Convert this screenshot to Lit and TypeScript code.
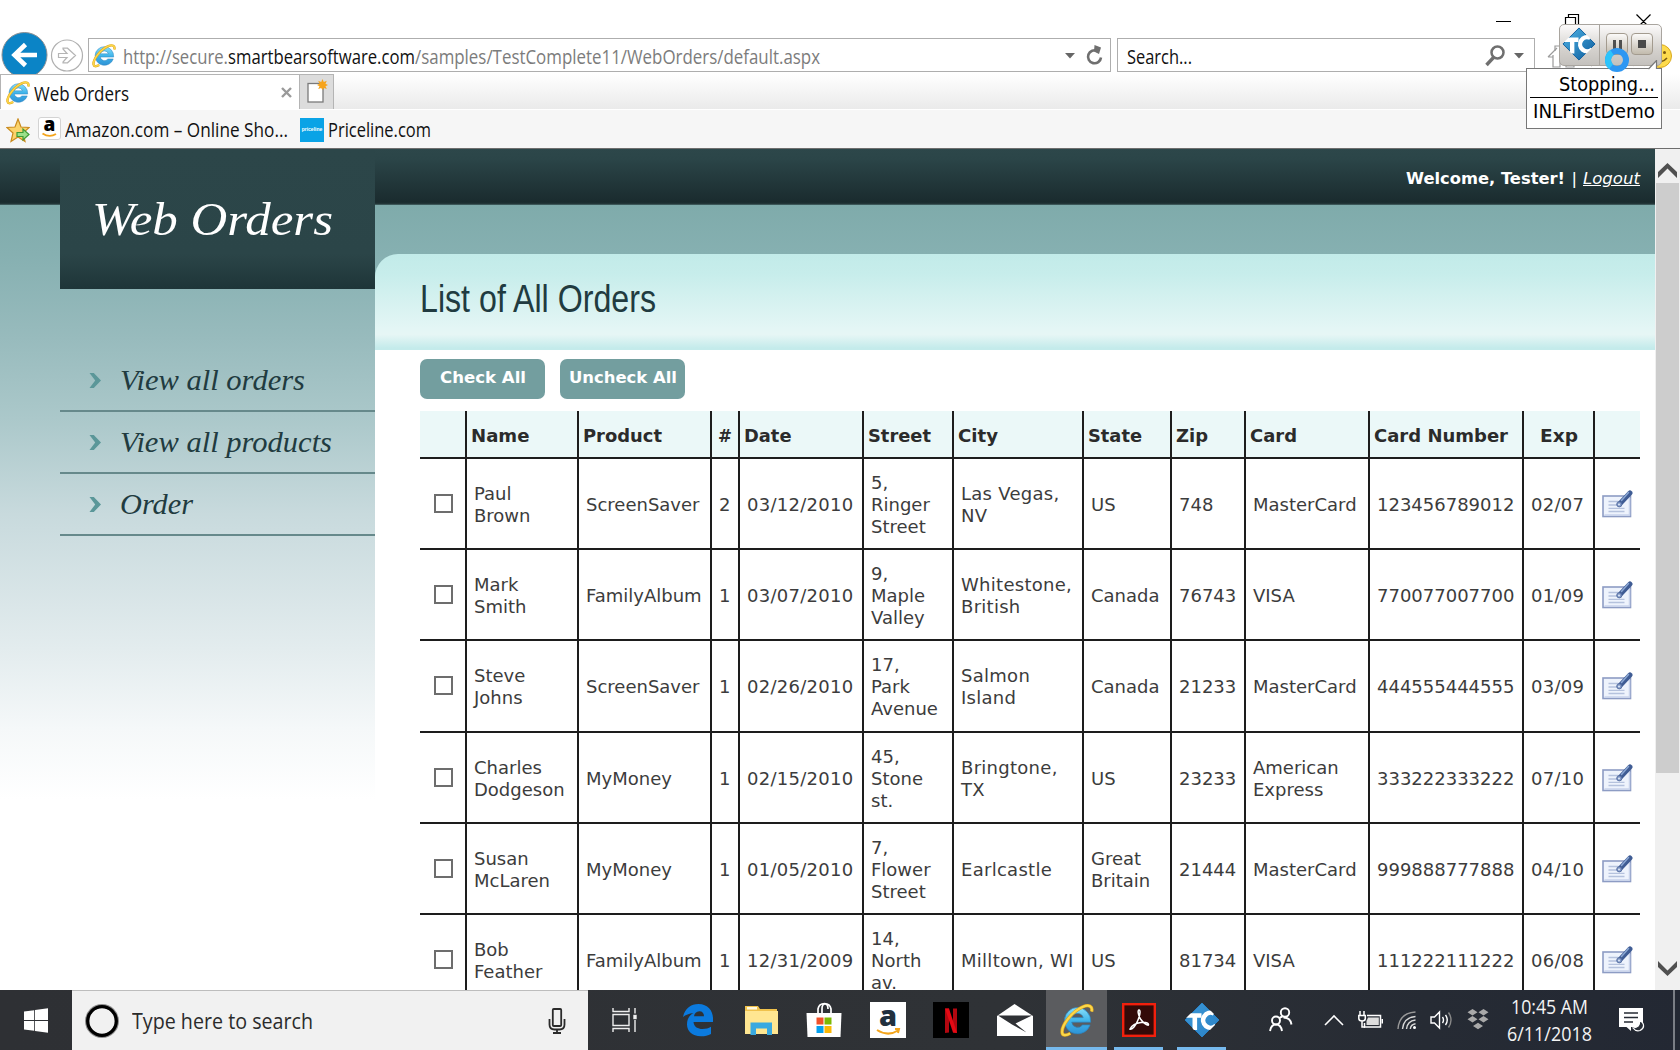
import { LitElement, html, css } from "lit";
import { customElement, property, state } from "lit/decorators.js";
import { styleMap } from "lit/directives/style-map.js";

/** One line of text, condensed or widened to occupy exactly `w` pixels. */
@customElement("fit-text")
class FitText extends LitElement {
  @property({ type: Number }) w = 0;
  @property({ type: Boolean }) underline = false;
  @state() private ratio = 1;
  static styles = css`
    :host { display: inline-block; white-space: nowrap; flex: none; }
    .box { display: block; }
    .run { display: inline-block; transform-origin: 0 50%; }
    .under { text-decoration: underline; }
  `;
  firstUpdated() {
    const run = this.renderRoot.querySelector(".run") as HTMLElement;
    if (run.offsetWidth) this.ratio = this.w / run.getBoundingClientRect().width;
  }
  render() {
    return html`<span class="box" style=${styleMap({ width: `${this.w}px` })}
      ><span class="run ${this.underline ? "under" : ""}" style=${styleMap({ transform: `scaleX(${this.ratio})` })}><slot></slot></span></span>`;
  }
}

const ieLogo = (cls: string, id: string) => html`
  <svg class=${cls} viewBox="0 0 34 34">
    <defs><linearGradient id=${id} x1="0" y1="0" x2="0" y2="1">
      <stop offset="0" stop-color="#8be0fb"/><stop offset=".5" stop-color="#3fb4ea"/><stop offset="1" stop-color="#2f93d6"/>
    </linearGradient></defs>
    <path d="M17.5 4.5a13.2 13.2 0 1 0 12.6 17.4h-7.6a6 6 0 0 1-10.8-2.7h19a13.6 13.6 0 0 0-13.2-14.7zM11.8 14.6a6 6 0 0 1 11.4 0z" fill=${`url(#${id})`} stroke="#2a83bd" stroke-width=".7"/>
    <path d="M31.6 8.5c1.4-5-2.6-7.5-8.6-4.7C12 8.5 1 22.5 2.2 30c.5 3 4.2 2.6 8 .4" fill="none" stroke="#e0a21a" stroke-width="3.4"/>
    <path d="M31.6 8.5c1.4-5-2.6-7.5-8.6-4.7C12 8.5 1 22.5 2.2 30c.5 3 4.2 2.6 8 .4" fill="none" stroke="#fbd84a" stroke-width="2.1"/>
  </svg>`;

const tcLogo = (cls: string, id: string, light: string, dark: string) => html`
  <svg class=${cls} viewBox="0 0 36 36">
    <defs>
      <linearGradient id=${id} x1="0" y1="0" x2="1" y2="1">
        <stop offset="0" stop-color=${light}/><stop offset="1" stop-color=${dark}/>
      </linearGradient>
      <clipPath id=${id + "c"}><path d="M18 0 36 18 18 36 0 18z"/></clipPath>
    </defs>
    <path d="M18 1 35 18 18 35 1 18z" fill=${`url(#${id})`} stroke=${dark} stroke-linejoin="round" stroke-width="1"/>
    <g clip-path=${`url(#${id}c)`} stroke="#fff" fill="none">
      <path d="M1 13.500H17.500M10.800 13.500V28" stroke-width="4.600"/>
      <path d="M30 11.500a7.500 7.500 0 1 0 2 12" stroke-width="4.600"/>
    </g>
  </svg>`;

interface Order {
  name: string; product: string; qty: string; date: string; street: string; city: string;
  state: string; zip: string; card: string; number: string; exp: string;
}
const o = (name: string, product: string, qty: string, date: string, street: string, city: string,
  st: string, zip: string, card: string, number: string, exp: string): Order =>
  ({ name, product, qty, date, street, city, state: st, zip, card, number, exp });

const ORDERS: Order[] = [
  o("Paul\nBrown", "ScreenSaver", "2", "03/12/2010", "5,\nRinger\nStreet", "Las Vegas,\nNV", "US", "748", "MasterCard", "123456789012", "02/07"),
  o("Mark\nSmith", "FamilyAlbum", "1", "03/07/2010", "9,\nMaple\nValley", "Whitestone,\nBritish", "Canada", "76743", "VISA", "770077007700", "01/09"),
  o("Steve\nJohns", "ScreenSaver", "1", "02/26/2010", "17,\nPark\nAvenue", "Salmon\nIsland", "Canada", "21233", "MasterCard", "444555444555", "03/09"),
  o("Charles\nDodgeson", "MyMoney", "1", "02/15/2010", "45,\nStone\nst.", "Bringtone,\nTX", "US", "23233", "American\nExpress", "333222333222", "07/10"),
  o("Susan\nMcLaren", "MyMoney", "1", "01/05/2010", "7,\nFlower\nStreet", "Earlcastle", "Great\nBritain", "21444", "MasterCard", "999888777888", "04/10"),
  o("Bob\nFeather", "FamilyAlbum", "1", "12/31/2009", "14,\nNorth\nav.", "Milltown, WI", "US", "81734", "VISA", "111222111222", "06/08"),
];
const HEADS: [string, number][] = [["Name", 58.5], ["Product", 79], ["#", 14], ["Date", 47.5], ["Street", 63], ["City", 40],
  ["State", 54], ["Zip", 32], ["Card", 47], ["Card Number", 134], ["Exp", 38]];

/** Orders grid with check boxes and edit buttons. */
@customElement("orders-table")
class OrdersTable extends LitElement {
  static styles = css`
    :host { display: block; width: 1220px; font: 18px/22px Verdana, "DejaVu Sans", sans-serif; color: #3c3c3c; }
    .row { display: grid; grid-template-columns: 45px 112px 133px 28px 124px 90px 130px 88px 74px 124px 154px 71px 47px;
      height: 91.2px; box-sizing: border-box; border-bottom: 2px solid #1d1d1d; }
    .head { height: 48px; background: #ebf8f8; font-weight: bold; color: #2b2b2b; }
    .c { display: flex; align-items: center; border-left: 2px solid #1d1d1d; padding: 3px 0 0 7px; white-space: pre; }
    .c:first-child { border-left: none; padding: 0 0 0 14px; }
    .head .c { padding: 3px 0 0 4px; }
    .head .num { padding-left: 6px; }
    .date, .city { letter-spacing: .28px; }
    .head .exp { padding-left: 16px; }
    .row .last { padding-top: 1px; }
    .ck { width: 15px; height: 15px; border: 2px solid #6d6d6d; background: #fff; }
    .edit { width: 31px; height: 28px; }
  `;
  private edit() {
    return html`<svg class="edit" viewBox="0 0 31 28">
      <rect x="1" y="6" width="27.5" height="20.5" fill="#eef3fc" stroke="#8d9cc4" stroke-width="1.6"/>
      <path d="M2.5 25h25V8" fill="none" stroke="#c9d4ec" stroke-width="1.5"/>
      <path d="M6.5 11.500h10M6.500 15h9M6.500 18.300h16M6.500 21.500h16" stroke="#b5c2dd" stroke-width="1.3"/>
      <path d="M18.500 13 28 3" stroke="#3f5c94" stroke-width="5" stroke-linecap="round"/>
      <path d="M19.5 10.5 26.500 2.500" stroke="#8ba7d3" stroke-width="1.5" stroke-linecap="round"/>
      <circle cx="17.3" cy="14.3" r="2.6" fill="#7f97c4" stroke="#4b659b" stroke-width=".8"/>
      <circle cx="17" cy="14.6" r="1" fill="#dfe8f6"/>
    </svg>`;
  }
  render() {
    const headCls = (h: string) => (h === "Exp" ? "c exp" : h === "#" ? "c num" : "c");
    return html`
      <div class="row head">
        <div class="c"></div>
        ${HEADS.map(([h, w]) => html`<div class=${headCls(h)}><fit-text .w=${w}>${h}</fit-text></div>`)}
        <div class="c"></div>
      </div>
      ${ORDERS.map(r => html`<div class="row">
        <div class="c"><span class="ck"></span></div>
        <div class="c">${r.name}</div><div class="c">${r.product}</div><div class="c">${r.qty}</div>
        <div class="c date">${r.date}</div><div class="c">${r.street}</div><div class="c city">${r.city}</div>
        <div class="c">${r.state}</div><div class="c">${r.zip}</div><div class="c">${r.card}</div>
        <div class="c">${r.number}</div><div class="c date">${r.exp}</div><div class="c last">${this.edit()}</div>
      </div>`)}`;
  }
}

/** Browser window frame: address bar, tabs, favourites. */
@customElement("browser-chrome")
class BrowserChrome extends LitElement {
  static styles = css`
    :host { display: flex; flex-direction: column; height: 149px; box-sizing: border-box; background: #fff; border-bottom: 1px solid #6e6e6e;
      font: 20px/26px "Segoe UI", "Open Sans", sans-serif; color: #111; }
    .caption { height: 38px; display: flex; justify-content: flex-end; padding-right: 28px; box-sizing: border-box; }
    .win { width: 160px; height: 26px; margin-top: 8px; }
    .bar { height: 36px; display: flex; align-items: flex-start; }
    .nav { width: 88px; height: 43px; margin-top: -7px; flex: none; }
    .field { height: 34px; box-sizing: border-box; border: 1px solid #aeaeae; display: flex; align-items: center; background: #fff; }
    .addr { width: 1023px; padding: 2px 5px 0 3px; }
    .search { width: 418px; margin-left: 6px; padding: 2px 10px 0 9px; }
    .field fit-text { margin-top: 1px; }
    .ie { width: 24px; height: 25px; flex: none; }
    .addr .ie { margin-right: 7px; margin-top: -2px; }
    .dim { color: #7c7c7c; }
    .grow { flex: 1; }
    .tools { width: 145px; height: 34px; flex: none; }
    .drop { width: 10px; height: 6px; margin-right: 10px; }
    .reload { width: 20px; height: 22px; margin-top: -3px; }
    .glass { width: 22px; height: 24px; margin-right: 8px; margin-top: -1px; }
    .drop2 { width: 10px; height: 6px; }
    .tabs { height: 35px; display: flex; background: linear-gradient(#fff, #eaeaea); }
    .tab { width: 300px; box-sizing: border-box; border: 1px solid #b4b4b4; border-bottom: none; background: #fff; display: flex; align-items: center; padding: 0 7px 0 5px; }
    .tab .ie { margin-right: 4px; }
    .tab fit-text { margin-top: 3px; }
    .x { width: 11px; height: 11px; }
    .new { width: 34px; box-sizing: border-box; border: 1px solid #b4b4b4; border-left: none; border-bottom: none; background: #dcdcdc; display: flex; justify-content: center; align-items: center; }
    .page { width: 22px; height: 24px; margin-top: -2px; }
    .favs { height: 39px; box-sizing: border-box; border-top: 1px solid #fff; background: #f6f6f6; display: flex; align-items: center; padding-left: 6px; }
    .favs fit-text { margin-top: 2px; }
    .star { width: 24px; height: 25px; margin-right: 8px; margin-top: 2px; }
    .amz { width: 23px; height: 24px; margin-right: 4px; margin-top: -1px; }
    .price { width: 24px; height: 24px; margin: 2px 4px 0 12px; background: #0aa3e6; color: #fff; display: flex; align-items: center; justify-content: center; font: bold 5px/6px "Liberation Sans", sans-serif; }
    .price span { margin-top: -2px; }
  `;
  render() {
    return html`
      <div class="caption"><svg class="win" viewBox="0 0 160 26" fill="none" stroke="#000" stroke-width="1.2">
        <path d="M4 13.500h15M73.500 9.500h10v10h-10zM76.500 9V6.500h10v10H84M144.500 6.500l14 14M158.500 6.500l-14 14"/></svg></div>
      <div class="bar">
        <svg class="nav" viewBox="0 0 88 43">
          <circle cx="24.500" cy="24" r="22.500" fill="#0b84c6" stroke="#8a8f93" stroke-width="1"/>
          <path d="M14 24h23M25.500 13.500 14.500 24l11 10.500" fill="none" stroke="#fff" stroke-width="4.600"/>
          <circle cx="67" cy="24.500" r="15.500" fill="#fff" stroke="#b0b0b0" stroke-width="1.200"/>
          <path d="M58.500 22.500h8.500l-4-4.500v-.8h4.500l8 7.300-8 7.300h-4.500v-.8l4-4.500h-8.500z" fill="#fff" stroke="#b5b5b5" stroke-width="1.200"/>
        </svg>
        <div class="field addr">
          ${ieLogo("ie", "ie1")}
          <fit-text .w=${105} class="dim">http://secure.</fit-text><fit-text .w=${187}>smartbearsoftware.com</fit-text><fit-text .w=${405} class="dim">/samples/TestComplete11/WebOrders/default.aspx</fit-text>
          <span class="grow"></span>
          <svg class="drop" viewBox="0 0 10 6"><path d="M0 0h10L5 5.500z" fill="#666"/></svg>
          <svg class="reload" viewBox="0 0 20 22"><path d="M12.500 7A6.500 6.500 0 1 0 16 13.500" fill="none" stroke="#6f6f6f" stroke-width="2.600"/><path d="M9.500 1 16 3.500 14 10 9 7.500z" fill="#6f6f6f"/></svg>
        </div>
        <div class="field search">
          <fit-text .w=${65}>Search...</fit-text><span class="grow"></span>
          <svg class="glass" viewBox="0 0 22 24"><circle cx="13.500" cy="8.500" r="6" fill="none" stroke="#6f6f6f" stroke-width="2.500"/><path d="M9.500 13.500 2.500 21" stroke="#6f6f6f" stroke-width="3.400"/></svg>
          <svg class="drop2" viewBox="0 0 10 6"><path d="M0 0h10L5 5.500z" fill="#666"/></svg>
        </div>
        <svg class="tools" viewBox="0 0 145 34">
          <path d="M13 19l9-9M18 17v12h7v-9h6v9h8v-12M13 19h5" fill="none" stroke="#9a9a9a" stroke-width="1.200"/>
          <path d="M20 13V8h4" fill="none" stroke="#9a9a9a" stroke-width="1.200"/>
          <path d="M56 28l8-6 8 6M98 28l6-8 6 8" fill="none" stroke="#9a9a9a" stroke-width="1.200"/>
          <circle cx="125" cy="18" r="11.500" fill="#fddb4d" stroke="#d9a91f"/>
          <circle cx="129.500" cy="14.500" r="1.500" fill="#7a5a10"/><path d="M119 21q7 6 13-1" fill="none" stroke="#7a5a10" stroke-width="1.500"/>
        </svg>
      </div>
      <div class="tabs">
        <div class="tab">${ieLogo("ie", "ie2")}<fit-text .w=${95}>Web Orders</fit-text><span class="grow"></span>
          <svg class="x" viewBox="0 0 11 11"><path d="M1 1l9 9M10 1l-9 9" stroke="#9a9a9a" stroke-width="2.400"/></svg></div>
        <div class="new"><svg class="page" viewBox="0 0 22 24"><rect x="2" y="4.500" width="15" height="18.500" fill="#fff" stroke="#7a7a7a" stroke-width="1.300"/>
          <path d="M16.500 0l1.300 3 3-1.300-1.300 3L22 6l-2.500 1.300 1.300 2.800-3-1L16.500 11l-1.300-1.900-3 1 1.300-2.800L11 6l2.500-1.300-1.300-3 3 1.300z" fill="#f6a41c"/></svg></div>
      </div>
      <div class="favs">
        <svg class="star" viewBox="0 0 24 25"><path d="M12 1l3 8 8.200.5-6.200 5.500 2 8.500-7-4.500-7 4.500 2-8.500L.8 9.500 9 9z" fill="#fbd36b" stroke="#c98a1d" stroke-width="1.200"/>
          <path d="M11 14.500h6v-3.500l6 5.500-6 5.500v-3.500h-6z" fill="#9be08a" stroke="#3f9a36" stroke-width="1.200"/></svg>
        <svg class="amz" viewBox="0 0 23 24"><rect x=".5" y=".5" width="22" height="22" rx="2.500" fill="#fff" stroke="#d3d3d3"/>
          <text x="11.500" y="14" text-anchor="middle" font-family="Open Sans, sans-serif" font-weight="800" font-size="19">a</text>
          <path d="M4.500 16.500q7 4.500 13.500.5" fill="none" stroke="#f4a51c" stroke-width="1.900"/></svg>
        <fit-text .w=${223}>Amazon.com – Online Sho...</fit-text>
        <span class="price"><span>priceline</span></span>
        <fit-text .w=${103}>Priceline.com</fit-text>
      </div>`;
  }
}

/** Windows task bar. */
@customElement("task-bar")
class TaskBar extends LitElement {
  static styles = css`
    :host { display: flex; height: 60px; background: linear-gradient(90deg, #2e3034 0, #2f3236 60%, #262b34 85%, #232833); font: 20px/27px "Segoe UI", "Open Sans", sans-serif; color: #f4f4f4; }
    .start { width: 72px; flex: none; display: flex; align-items: center; padding-left: 24px; box-sizing: border-box; }
    .flag { width: 24px; height: 25px; }
    .find { width: 516px; flex: none; box-sizing: border-box; border-top: 1px solid #bdbdbd; background: #f1f1f1; color: #2b2b2b; display: flex; align-items: center; padding: 0 22px 0 13px; }
    .ring { width: 34px; height: 38px; margin-right: 13px; }
    .hint { font-size: 21px; margin-top: 2px; }
    .grow { flex: 1; }
    .mic { width: 18px; height: 26px; }
    .apps { display: grid; grid-template-columns: 78px 63px 63px 64px 63px 64px 63px 61px 63px 63px; width: 645px; flex: none; }
    .app { display: flex; align-items: center; justify-content: center; box-sizing: border-box; border-bottom: 3px solid transparent; padding-top: 3px; }
    .app:first-child { padding-right: 5px; }
    .app svg { width: 36px; height: 36px; flex: none; }
    .app .small { width: 25px; height: 26px; }
    .app .mid { width: 34px; height: 34px; }
    .on { border-bottom-color: #76b9ed; }
    .cur { background: #5b5c5f; }
    .run { margin: 0 7px; }
    .side { flex: 1; display: flex; align-items: center; padding-left: 36px; }
    .side svg { flex: none; margin-top: -1px; }
    .p { width: 24px; height: 25px; margin-right: 31px; }
    .up { width: 20px; height: 12px; margin-right: 14px; }
    .bat { width: 25px; height: 20px; margin-right: 14px; }
    .wifi { width: 20px; height: 20px; margin-right: 13px; }
    .snd { width: 24px; height: 20px; margin-right: 12px; }
    .dbx { width: 24px; height: 21px; margin-right: 17px; }
    .clock { width: 84px; display: flex; flex-direction: column; align-items: center; }
    .note { width: 26px; height: 26px; margin-left: 28px; }
    .edge { width: 2px; align-self: stretch; background: #7a7e85; margin-left: 28px; }
  `;
  render() {
    return html`
      <div class="start"><svg class="flag" viewBox="0 0 24 25" fill="#fff"><path d="M0 3.600 10.200 2.200V12H0zM11 2.100 24 .2V12H11zM0 13h10.200v9.800L0 21.400zM11 13h13v11.800L11 22.900z"/></svg></div>
      <div class="find">
        <svg class="ring" viewBox="0 0 34 38"><circle cx="17" cy="19" r="15" fill="none" stroke="#8d8d8d" stroke-width="4"/><circle cx="17" cy="19" r="14.300" fill="none" stroke="#000" stroke-width="3.300"/></svg>
        <fit-text class="hint" .w=${181}>Type here to search</fit-text><span class="grow"></span>
        <svg class="mic" viewBox="0 0 18 26" fill="none" stroke="#2b2b2b" stroke-width="1.800"><rect x="4.800" y="1" width="8.400" height="17" rx="1"/><path d="M1.500 11v5.500q0 5 5 5h5q5 0 5-5V11M9 21.500v3.500M5 25h8"/></svg>
      </div>
      <div class="apps">
        <div class="app"><svg class="small" viewBox="0 0 25 26" fill="none" stroke="#eee" stroke-width="1.400"><path d="M1 1v3.500h16V1M1 25v-3.500h16V25M1 7.500h16v11H1zM23 1v5.500M23 13v12"/><rect x="22" y="8.500" width="2" height="3" fill="#fff"/></svg></div>
        <div class="app"><svg viewBox="0 0 36 36"><path d="M3 15C5 6 11 2 18.500 2 28 2 33 9 33 16.500V20H13.500c.5 5 4.500 7 9 7 3.500 0 6-.8 8.500-2.200V32c-3 1.600-6 2.300-10 2.300-9 0-14-5.300-14-12C7 17.500 9 13.500 13.500 11 9 11.500 5.500 13 3 15zm11-.8h10c0-3-1.500-5-4.700-5-3 0-4.800 2.200-5.300 5z" fill="#0b7ade"/></svg></div>
        <div class="app"><svg viewBox="0 0 36 36"><path d="M2 4h13l2 3h17v23H2z" fill="#f0c24c"/><path d="M2 9h33v23H2z" fill="#ffe691"/><rect x="4" y="5" width="10" height="2.500" fill="#fff8dc"/><path d="M7.500 33V20.500h21.500V33h-5v-6.500H13V33z" fill="#39a9e0"/></svg></div>
        <div class="app"><svg viewBox="0 0 36 36"><path d="M12 12V7q1-5.500 6.500-5.500T25 7v5M16 12V7q0-5 3-5t3 5" fill="none" stroke="#fff" stroke-width="1.700"/><path d="M.5 11h35L34.500 35H1.500z" fill="#fff"/><path d="M10.500 15.500h7v7h-7z" fill="#f0512a"/><path d="M18.500 15.500h7v7h-7z" fill="#7db904"/><path d="M10.500 24h7v7h-7z" fill="#05a0ee"/><path d="M18.500 24h7v7h-7z" fill="#fbb706"/></svg></div>
        <div class="app"><svg viewBox="0 0 36 36"><rect width="36" height="36" fill="#fff"/><text x="18" y="24" text-anchor="middle" font-family="Open Sans, sans-serif" font-weight="800" font-size="29" fill="#22303e">a</text><path d="M7 28q11 7 21 .5M25 27h4l-1 4" fill="none" stroke="#f4a51c" stroke-width="2"/></svg></div>
        <div class="app"><svg viewBox="0 0 36 36"><rect width="36" height="36" fill="#000"/><path d="M12 6.500h4v24l-4 .5zM20 6.500h4V31l-4-.5z" fill="#b20710"/><path d="M12 6.500h4L24 31l-4-.5z" fill="#e50914"/></svg></div>
        <div class="app"><svg viewBox="0 0 36 36"><path d="M0 14 17.500 2 36 14v20H0z" fill="#fff"/><path d="M1 13.500h34L18.500 21.500l11 9-14.500-8z" fill="#2f3135"/></svg></div>
        <div class="app cur on">${ieLogo("mid", "ie3")}</div>
        <div class="app on run"><svg class="mid" viewBox="0 0 34 34"><rect x="1.200" y="1.200" width="31.600" height="31.600" fill="#330a08" stroke="#f1200d" stroke-width="2.400"/><path d="M8 26c2-4 7-6 11-6.500 3-.3 7 0 7.500 2 0 2-5-1-8-5.500C16 12 15.500 7 17 7s1.500 4-1 10c-2 5-5.500 10-8 9z" fill="none" stroke="#fff" stroke-width="1.500"/></svg></div>
        <div class="app on run">${tcLogo("big", "tc1", "#3b97d6", "#2a82c6")}</div>
      </div>
      <div class="side">
        <svg class="p" viewBox="0 0 24 25" fill="none" stroke="#fff" stroke-width="1.900"><circle cx="16" cy="5.500" r="4.200"/><path d="M14.500 10.500q7 0 8 7M10.500 11q1-1 3-1.200"/><circle cx="7" cy="13.500" r="4"/><path d="M1 24q1-6.500 6-6.500T13 24"/></svg>
        <svg class="up" viewBox="0 0 20 12"><path d="M1 11 10 2l9 9" fill="none" stroke="#fff" stroke-width="1.600"/></svg>
        <svg class="bat" viewBox="0 0 25 20"><path d="M9 5.500h13.500v11.500H6.500v-4" fill="none" stroke="#fff" stroke-width="1.500"/><path d="M10 7.500h10.800v7.500H8.500v-4z" fill="#ddd"/><path d="M23.500 9h1.500v4.500h-1.500z" fill="#fff"/><path d="M2 1v4M6 1v4M.8 5.500h6.500v3q0 2.500-3.200 2.500T.8 8.500zM4 11v6h3" fill="none" stroke="#fff" stroke-width="1.500"/></svg>
        <svg class="wifi" viewBox="0 0 20 20" fill="none" stroke="#d8d8d8" stroke-width="1.400"><path d="M1 19Q2 3 18.500 2" stroke="#999"/><path d="M5.500 19q1-11.500 13-12.500M9.500 19q.8-8 9-9M13.300 19q.5-4.500 5.200-5.200"/><circle cx="17.500" cy="17.500" r="1.500" fill="#fff" stroke="none"/></svg>
        <svg class="snd" viewBox="0 0 24 20" fill="none" stroke="#fff" stroke-width="1.400"><path d="M1 7h3.500l5-5v16l-5-5H1z"/><path d="M12.500 7q2 3 0 6M15.500 5q3.500 5 0 10"/><path d="M18.500 2.500q5 7.500 0 15" stroke="#888"/></svg>
        <svg class="dbx" viewBox="0 0 24 21" fill="#a9a9a9"><path d="M6.500 0l5 3.300-5 3.300-5-3.300zM17.500 0l5 3.300-5 3.300-5-3.300zM6.500 7l5 3.300-5 3.300-5-3.300zM17.500 7l5 3.300-5 3.300-5-3.300zM12 13.800l5 3.200-5 3.300L7 17z"/></svg>
        <div class="clock"><fit-text .w=${77}>10:45 AM</fit-text><fit-text .w=${85}>6/11/2018</fit-text></div>
        <svg class="note" viewBox="0 0 26 26"><path d="M0 1h24v19H12v4l-4.500-4H0z" fill="#fff"/><path d="M5 6h14M5 10.500h14M5 15h9" stroke="#262b34" stroke-width="1.500"/><path d="M20.500 13.500q1 7-6.500 7.500 3 4 7 2.500 5-2.500 3-7-1-2-3.500-3z" fill="#2a2f38" stroke="#fff" stroke-width="1.200"/></svg>
        <span class="edge"></span>
      </div>`;
  }
}

@customElement("app-root")
class AppRoot extends LitElement {
  static styles = css`
    :host { display: flex; flex-direction: column; position: relative; width: 1680px; height: 1050px; overflow: hidden; background: #fff; font-family: Verdana, "DejaVu Sans", sans-serif; }
    .view { height: 841px; display: flex; overflow: hidden; flex: none; }
    .site { width: 1655px; height: 841px; overflow: hidden; display: flex; align-items: flex-start;
      background: linear-gradient(#2d474a, #2b4548 18%, #1a2b2e 95%, #24383a 98%, #4f7071) 0 0 / 100% 56px no-repeat,
        linear-gradient(#7fabab 56px, #86b0b1 105px, #98bbbd 190px, #abc8ca 270px, #c8dadd 365px, #e3ecee 500px, #f5f8f9 580px, #fff 650px) 0 0 / 100% 100% no-repeat; }
    .left { width: 315px; margin-left: 60px; flex: none; }
    .brand { height: 140px; background: linear-gradient(#2c4649, #2b4548 75%, #1e3538); display: flex; align-items: center; padding-left: 32px; box-sizing: border-box;
      font: italic 47px/56px Georgia, "Liberation Serif", serif; color: #fff; }
    .menu { padding-top: 61px; font: italic 29px/36px Georgia, "Liberation Serif", serif; color: #213b40; }
    .item { height: 62px; box-sizing: border-box; border-bottom: 2px solid #66898b; display: flex; align-items: center; padding-left: 29px; }
    .chev { width: 12px; height: 15px; margin-right: 19px; }
    .item fit-text { margin-top: -1px; }
    .main { width: 1280px; flex: none; display: flex; flex-direction: column; }
    .user { height: 105px; flex: none; box-sizing: border-box; display: flex; justify-content: flex-end; gap: 6px; padding: 19px 15px 0 0; color: #fff; font-size: 16.5px; line-height: 22px; }
    .user .b { font-weight: bold; }
    .user .out { font-style: italic; }
    .band { height: 96px; flex: none; box-sizing: border-box; border-radius: 23px 0 0 0; padding: 0 0 7px 45px; display: flex; align-items: center;
      background: linear-gradient(#c2ebe9, #c7edeb 20%, #e4f6f5 78%, #e6f6f5 84%, #c4ebeb 98%); font: 38px/44px Arial, "Liberation Sans", sans-serif; color: #213b40; }
    .body { background: #fff; padding: 9px 0 0 45px; }
    .btns { display: flex; gap: 15px; margin-bottom: 12px; }
    .btn { width: 125px; height: 40px; border-radius: 7px; background: #739e9f; color: #fff; font-weight: bold; font-size: 16.5px; line-height: 22px; display: flex; align-items: center; justify-content: center; padding-bottom: 2px; box-sizing: border-box; }
    .scroll { width: 25px; background: #f0f0f0; display: flex; flex-direction: column; align-items: center; padding: 13px 0 13px; box-sizing: border-box; }
    .arr { width: 21px; height: 17px; flex: none; }
    .thumb { width: 23px; height: 590px; background: #cdcdcd; margin-top: 4px; }
    .rest { flex: 1; }
    .agent { position: absolute; left: 1559px; top: 24px; width: 103px; height: 42px; box-sizing: border-box; border: 1.5px solid #a9a59f; border-radius: 5px; background: linear-gradient(#fbfafa, #d5d2ce 60%, #c4c1bd); display: flex; align-items: center; }
    .agent .tc { width: 34px; height: 34px; margin-left: 2px; margin-top: -2px; flex: none; }
    .sep { width: 1px; align-self: stretch; background: #a9a59f; margin: 0 6px 0 3px; }
    .key { width: 22px; height: 22px; box-sizing: border-box; border: 1.5px solid #a39b8f; border-radius: 4px; background: linear-gradient(#fbfaf9, #d8d3cb 60%, #c2bbad); display: flex; align-items: center; justify-content: center; gap: 3px; margin: 0 3px 2px 0; flex: none; }
    .pz { width: 3px; height: 9px; background: #4f4f4f; }
    .st { width: 8px; height: 8px; background: #4a4a4a; }
    .tip { position: absolute; left: 1526px; top: 68px; width: 136px; height: 61px; box-sizing: border-box; border: 1.5px solid #777; background: #fff; font: 20px/25px Tahoma, "DejaVu Sans Condensed", "DejaVu Sans", sans-serif; color: #000; padding: 3px 3px 0; display: flex; flex-direction: column; align-items: flex-end; }
    .tip fit-text { margin-right: 3px; }
    .tip .line { width: 128px; height: 1px; background: #000; margin-bottom: 1px; }
    .notch { position: absolute; left: 1648px; top: 60px; width: 10px; height: 10px; }
    .busy { position: absolute; left: 1603px; top: 46px; width: 28px; height: 28px; }
  `;
  private item(t: string, w: number) {
    return html`<div class="item"><svg class="chev" viewBox="0 0 12 15"><path d="M.5 0h4.300L12 7.500 4.800 15H.5l5.700-7.500z" fill="#5b9799"/></svg><fit-text .w=${w}>${t}</fit-text></div>`;
  }
  render() {
    return html`
      <browser-chrome></browser-chrome>
      <div class="view">
        <div class="site">
          <div class="left">
            <div class="brand"><fit-text .w=${241}>Web Orders</fit-text></div>
            <div class="menu">${this.item("View all orders", 185)}${this.item("View all products", 212)}${this.item("Order", 73)}</div>
          </div>
          <div class="main">
            <div class="user"><fit-text class="b" .w=${159}>Welcome, Tester!</fit-text><span>|</span><fit-text class="out" underline .w=${57}>Logout</fit-text></div>
            <div class="band"><fit-text .w=${236}>List of All Orders</fit-text></div>
            <div class="body">
              <div class="btns"><div class="btn"><fit-text .w=${86}>Check All</fit-text></div><div class="btn"><fit-text .w=${108}>Uncheck All</fit-text></div></div>
              <orders-table></orders-table>
            </div>
          </div>
        </div>
        <div class="scroll">
          <svg class="arr" viewBox="0 0 21 17"><path d="M1 16V10L10.500 1 20 10v6l-9.500-9.500z" fill="#505050"/></svg>
          <div class="thumb"></div><div class="rest"></div>
          <svg class="arr" viewBox="0 0 21 17"><path d="M1 1v6l9.500 9L20 7V1l-9.500 9.500z" fill="#505050"/></svg>
        </div>
      </div>
      <task-bar></task-bar>
      <div class="agent">${tcLogo("tc", "tc2", "#4fb4e6", "#0d5c9c")}<span class="sep"></span>
        <span class="key"><span class="pz"></span><span class="pz"></span></span><span class="key"><span class="st"></span></span></div>
      <div class="tip"><fit-text .w=${96}>Stopping...</fit-text><span class="line"></span><fit-text .w=${122}>INLFirstDemo</fit-text></div>
      <svg class="notch" viewBox="0 0 10 10"><path d="M.5 9 8.500.5V10H.5" fill="#fff"/><path d="M.5 9 8.500.5V9" fill="none" stroke="#777" stroke-width="1.200"/></svg>
      <svg class="busy" viewBox="0 0 28 28" fill="none" stroke-width="6"><circle cx="14" cy="14" r="9" stroke="#2e97f2"/><path d="M8 20.700A9 9 0 0 1 9 6.500" stroke="#2cc4fb"/></svg>`;
  }
}
